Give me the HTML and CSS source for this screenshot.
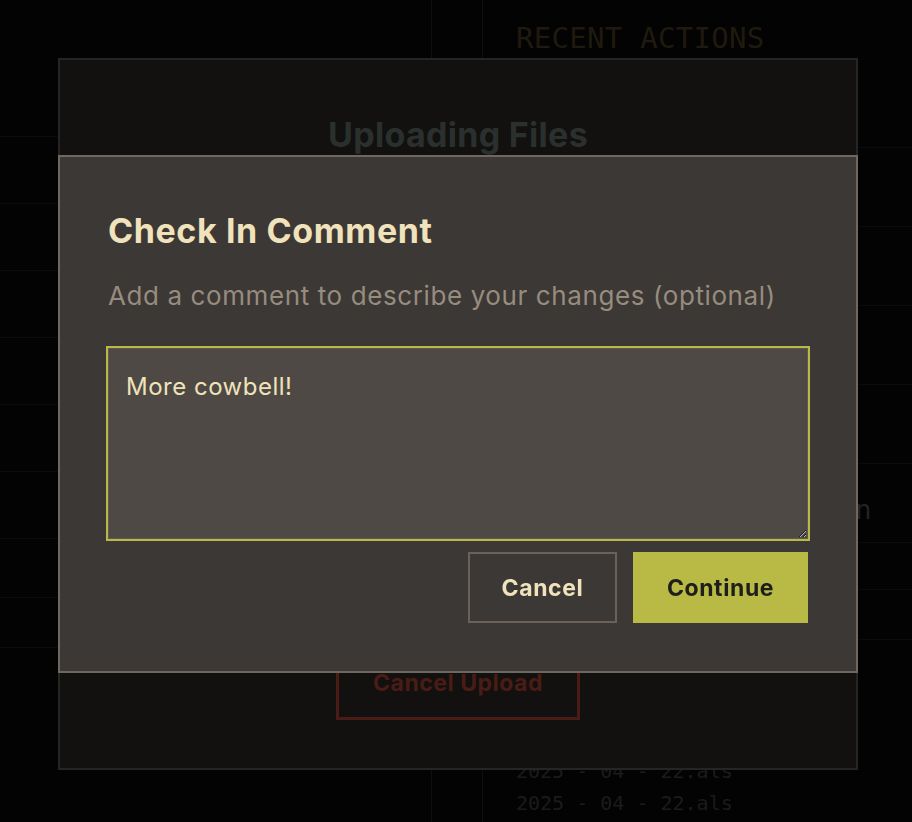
FILE: index.html
```html
<!DOCTYPE html>
<html lang="en">
<head>
    <meta charset="UTF-8">
    <meta name="viewport" content="width=device-width, initial-scale=1.0">
    <title>Check In Comment</title>
    <link rel="stylesheet" href="styles.css">
</head>
<body>

    <!-- Project page behind the dialogs -->
    <div class="app">
        <div class="files-panel">
            <div class="file-row"></div>
            <div class="file-row"></div>
            <div class="file-row"></div>
            <div class="file-row"></div>
            <div class="file-row"></div>
            <div class="file-row"></div>
            <div class="file-row"></div>
            <div class="file-row short"></div>
            <div class="file-row shorter"></div>
        </div>
        <div class="gutter"></div>
        <div class="actions-panel">
            <h3 class="actions-title">RECENT ACTIONS</h3>
            <div class="action-row"></div>
            <div class="action-row"></div>
            <div class="action-row"></div>
            <div class="action-row"></div>
            <div class="action-row"><span class="action-user">Checked in by Kevin</span></div>
            <div class="action-row short"></div>
            <div class="action-row shorter"></div>
            <div class="action-files">
                <div class="action-file">2025 - 04 - 22.als</div>
                <div class="action-file">2025 - 04 - 22.als</div>
            </div>
        </div>
    </div>

    <!-- Upload progress modal -->
    <div class="overlay">
        <div class="upload-modal">
            <h2 class="upload-title">Uploading Files</h2>
            <div class="upload-list"></div>
            <button class="cancel-upload" type="button">Cancel Upload</button>
        </div>
    </div>

    <!-- Check in comment dialog -->
    <div class="overlay top">
        <form class="comment-dialog">
            <h2 class="dialog-title">Check In Comment</h2>
            <p class="dialog-text">Add a comment to describe your changes (optional)</p>
            <textarea class="comment-input" name="comment" autofocus>More cowbell!</textarea>
            <div class="dialog-buttons">
                <button class="cancel-button" type="button">Cancel</button>
                <button class="continue-button" type="submit">Continue</button>
            </div>
        </form>
    </div>

</body>
</html>
```

FILE: styles.css
```css
/* Page behind the dialogs */
body {
    margin: 0;
    height: 822px;
    overflow: hidden;
    background: #030303;
    font-family: Inter, Roboto, "Liberation Sans", sans-serif;
}

.app {
    display: flex;
    height: 100%;
}

.files-panel {
    width: 432px;
    padding-top: 70px;
    border-right: 1px solid #0e0e0e;
    box-sizing: border-box;
}

.file-row {
    height: 66px;
    border-bottom: 1px solid #0b0b0b;
}
.file-row.short {
    height: 58px;
}
.file-row.shorter {
    height: 49px;
}

.gutter {
    width: 50px;
    border-right: 1px solid #0e0e0e;
}

.actions-panel {
    flex: 1;
    display: flex;
    flex-direction: column;
}

.actions-title {
    margin: 0;
    height: 148px;
    box-sizing: border-box;
    padding: 21px 0 0 33px;
    font-family: "DejaVu Sans Mono", monospace;
    font-weight: normal;
    font-size: 29px;
    letter-spacing: 0.3px;
    color: #1f1a0d;
    border-bottom: 1px solid #0b0b0b;
}

.action-row {
    height: 78px;
    border-bottom: 1px solid #0b0b0b;
    display: flex;
    align-items: center;
    justify-content: flex-end;
    padding-right: 41px;
}
.action-row.short {
    height: 46px;
}
.action-row.shorter {
    height: 49px;
}

.action-user {
    font-size: 26px;
    color: #242424;
    padding-top: 12px;
}

.action-files {
    padding: 115px 0 0 33px;
}

.action-file {
    font-family: "DejaVu Sans Mono", monospace;
    font-size: 20px;
    line-height: 32px;
    color: #1b1b1b;
}

/* Modals */
.overlay {
    position: fixed;
    inset: 0;
    display: flex;
    justify-content: center;
    align-items: flex-start;
    padding: 58px 0 0 4px;
}
.overlay.top {
    padding-top: 155px;
}

.upload-modal {
    width: 800px;
    height: 712px;
    box-sizing: border-box;
    background: #121110;
    border: 2px solid #252523;
    display: flex;
    flex-direction: column;
    align-items: center;
    padding: 54px 0 48px;
}

.upload-title {
    margin: 0;
    font-size: 34px;
    line-height: 41px;
    letter-spacing: 0.3px;
    font-weight: bold;
    color: #2a302e;
}

.upload-list {
    flex: 1;
}

.cancel-upload {
    font-family: inherit;
    font-size: 23px;
    font-weight: bold;
    line-height: 28px;
    letter-spacing: 0.5px;
    padding: 20px 34px;
    background: none;
    border: 3px solid #4a1c15;
    color: #4a1c15;
}

.comment-dialog {
    width: 800px;
    box-sizing: border-box;
    background: #3c3835;
    border: 2px solid #70685f;
    padding: 54px 48px 48px;
    display: flex;
    flex-direction: column;
}

.dialog-title {
    margin: 0;
    font-size: 34px;
    line-height: 40px;
    font-weight: bold;
    letter-spacing: 0.6px;
    color: #f0e2bb;
}

.dialog-text {
    margin: 28px 0 36px;
    font-size: 26px;
    line-height: 33px;
    letter-spacing: 0.6px;
    color: #978c7e;
}

.comment-input {
    height: 191px;
    box-sizing: border-box;
    resize: vertical;
    padding: 21px 17px;
    font-family: inherit;
    font-size: 24px;
    line-height: 33px;
    letter-spacing: 0.5px;
    color: #f0e2bb;
    background: #4e4945;
    border: 1px solid #5e5852;
    outline: 2px solid #b9b946;
    margin: 0;
}

.dialog-buttons {
    display: flex;
    justify-content: flex-end;
    gap: 16px;
    margin-top: 13px;
}

.cancel-button, .continue-button {
    height: 71px;
    font-family: inherit;
    font-size: 23px;
    font-weight: bold;
    letter-spacing: 0.6px;
    cursor: pointer;
}

.cancel-button {
    width: 149px;
    background: none;
    border: 2px solid #6a625a;
    color: #f0e2bb;
}

.continue-button {
    width: 175px;
    background: #b9b946;
    border: none;
    color: #1e1e1a;
}
```
